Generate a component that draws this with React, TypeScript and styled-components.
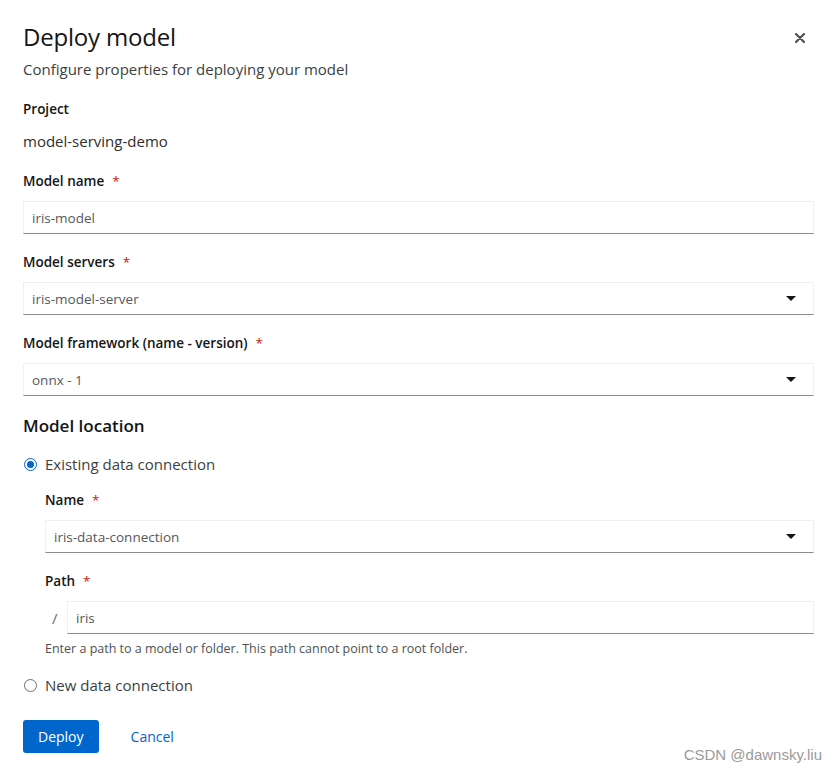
import styled, { createGlobalStyle } from 'styled-components'

const GlobalStyle = createGlobalStyle`
    body{
        margin: 0;
        background: #fff;
        font-family: "Open Sans", "Noto Sans", sans-serif;
        color: #151515;
    }
`

const Modal = styled.div`
    position: relative;
    width: 836px;
    height: 774px;
    box-sizing: border-box;
    padding: 22px 22px 0 23px;
    display: flex;
    flex-direction: column;
`

const Header = styled.div`
    display: flex;
    justify-content: space-between;
    align-items: flex-start;
`

const Title = styled.h1`
    margin: 0;
    font-size: 24px;
    font-weight: 400;
    line-height: 29px;
    letter-spacing: -0.2px;
`

const CloseButton = styled.button`
    border: none;
    background: none;
    padding: 0;
    margin: 8px 6px 0 0;
    width: 16px;
    height: 16px;
    display: flex;
    align-items: center;
    justify-content: center;
    cursor: pointer;
`

const Subtitle = styled.p`
    margin: 6px 0 0;
    font-size: 15px;
    line-height: 24px;
    color: #3c3f42;
`

const Form = styled.div`
    display: flex;
    flex-direction: column;
    margin-top: 18px;
`

const Field = styled.div<{ $gap?: number }>`
    display: flex;
    flex-direction: column;
    margin-bottom: ${p => p.$gap ?? 18}px;
`

const Label = styled.div`
    font-size: 13.5px;
    font-weight: 600;
    line-height: 21px;
    color: #151515;
`

const Required = styled.span`
    color: #c9190b;
    margin-left: 8px;
    font-weight: 400;
`

const StaticValue = styled.div`
    margin-top: 9px;
    font-size: 15px;
    line-height: 24px;
    color: #2d2f31;
`

const InputBox = styled.div`
    margin-top: 9px;
    height: 33px;
    flex: 1 0 auto;
    box-sizing: border-box;
    border: 1px solid #f0f0f0;
    border-bottom-color: #8a8d90;
    display: flex;
    align-items: center;
    justify-content: space-between;
    padding: 0 17px 0 8px;
    font-size: 13.5px;
    color: #55585c;
`

const Caret = styled.span`
    width: 0;
    height: 0;
    border-left: 5px solid transparent;
    border-right: 5px solid transparent;
    border-top: 5px solid #151515;
`

const SectionTitle = styled.h2`
    margin: 16px 0 0;
    font-size: 17px;
    font-weight: 600;
    line-height: 27px;
`

const RadioRow = styled.label`
    display: flex;
    align-items: center;
    gap: 8px;
    font-size: 15px;
    line-height: 24px;
    color: #3c3f42;
`

const RadioDot = styled.span<{ $checked?: boolean }>`
    width: 13px;
    height: 13px;
    box-sizing: border-box;
    border-radius: 50%;
    border: 1px solid ${p => (p.$checked ? '#0066cc' : '#6a6e73')};
    display: flex;
    align-items: center;
    justify-content: center;
    margin-left: 1px;
    &::after{
        content: '';
        width: 7px;
        height: 7px;
        border-radius: 50%;
        background: ${p => (p.$checked ? '#0066cc' : 'transparent')};
    }
`

const Nested = styled.div`
    display: flex;
    flex-direction: column;
    padding-left: 22px;
`

const PathRow = styled.div`
    display: flex;
    align-items: flex-end;
`

const Slash = styled.span`
    width: 22px;
    height: 33px;
    display: flex;
    align-items: center;
    padding-left: 7px;
    box-sizing: border-box;
    font-size: 15px;
    color: #6a6e73;
`

const Helper = styled.div`
    margin-top: 5px;
    font-size: 12.5px;
    line-height: 20px;
    color: #4f5255;
`

const Actions = styled.div`
    display: flex;
    align-items: center;
    gap: 32px;
    margin-top: 23px;
`

const PrimaryButton = styled.button`
    height: 33px;
    padding: 0 15px;
    border: none;
    border-radius: 3px;
    background: #0066cc;
    color: #fff;
    font-family: inherit;
    font-size: 14px;
`

const LinkButton = styled.button`
    border: none;
    background: none;
    padding: 0;
    color: #0066cc;
    font-family: inherit;
    font-size: 14px;
`

const Watermark = styled.div`
    position: absolute;
    right: 14px;
    bottom: 11px;
    font-family: "Liberation Sans", Arial, sans-serif;
    font-size: 15px;
    color: #9a9a9a;
`

const App = () => {
    return (
        <>
            <GlobalStyle />
            <Modal>
                <Header>
                    <Title>Deploy model</Title>
                    <CloseButton aria-label="Close">
                        <svg width="10" height="10" viewBox="0 0 10 10">
                            <path d="M1 1 L9 9 M9 1 L1 9" stroke="#4f5255" strokeWidth="2.2" strokeLinecap="round" />
                        </svg>
                    </CloseButton>
                </Header>
                <Subtitle>Configure properties for deploying your model</Subtitle>

                <Form>
                    <Field>
                        <Label>Project</Label>
                        <StaticValue>model-serving-demo</StaticValue>
                    </Field>
                    <Field>
                        <Label>Model name<Required>*</Required></Label>
                        <InputBox>iris-model</InputBox>
                    </Field>
                    <Field>
                        <Label>Model servers<Required>*</Required></Label>
                        <InputBox>iris-model-server<Caret /></InputBox>
                    </Field>
                    <Field $gap={0}>
                        <Label>Model framework (name - version)<Required>*</Required></Label>
                        <InputBox>onnx - 1<Caret /></InputBox>
                    </Field>

                    <SectionTitle>Model location</SectionTitle>
                    <Field $gap={14} style={{ marginTop: 13 }}>
                        <RadioRow><RadioDot $checked />Existing data connection</RadioRow>
                    </Field>
                    <Nested>
                        <Field>
                            <Label>Name<Required>*</Required></Label>
                            <InputBox>iris-data-connection<Caret /></InputBox>
                        </Field>
                        <Field $gap={14}>
                            <Label>Path<Required>*</Required></Label>
                            <PathRow>
                                <Slash>/</Slash>
                                <InputBox>iris</InputBox>
                            </PathRow>
                            <Helper>Enter a path to a model or folder. This path cannot point to a root folder.</Helper>
                        </Field>
                    </Nested>
                    <RadioRow><RadioDot />New data connection</RadioRow>

                    <Actions>
                        <PrimaryButton>Deploy</PrimaryButton>
                        <LinkButton>Cancel</LinkButton>
                    </Actions>
                </Form>
                <Watermark>CSDN @dawnsky.liu</Watermark>
            </Modal>
        </>
    )
}

export default App
